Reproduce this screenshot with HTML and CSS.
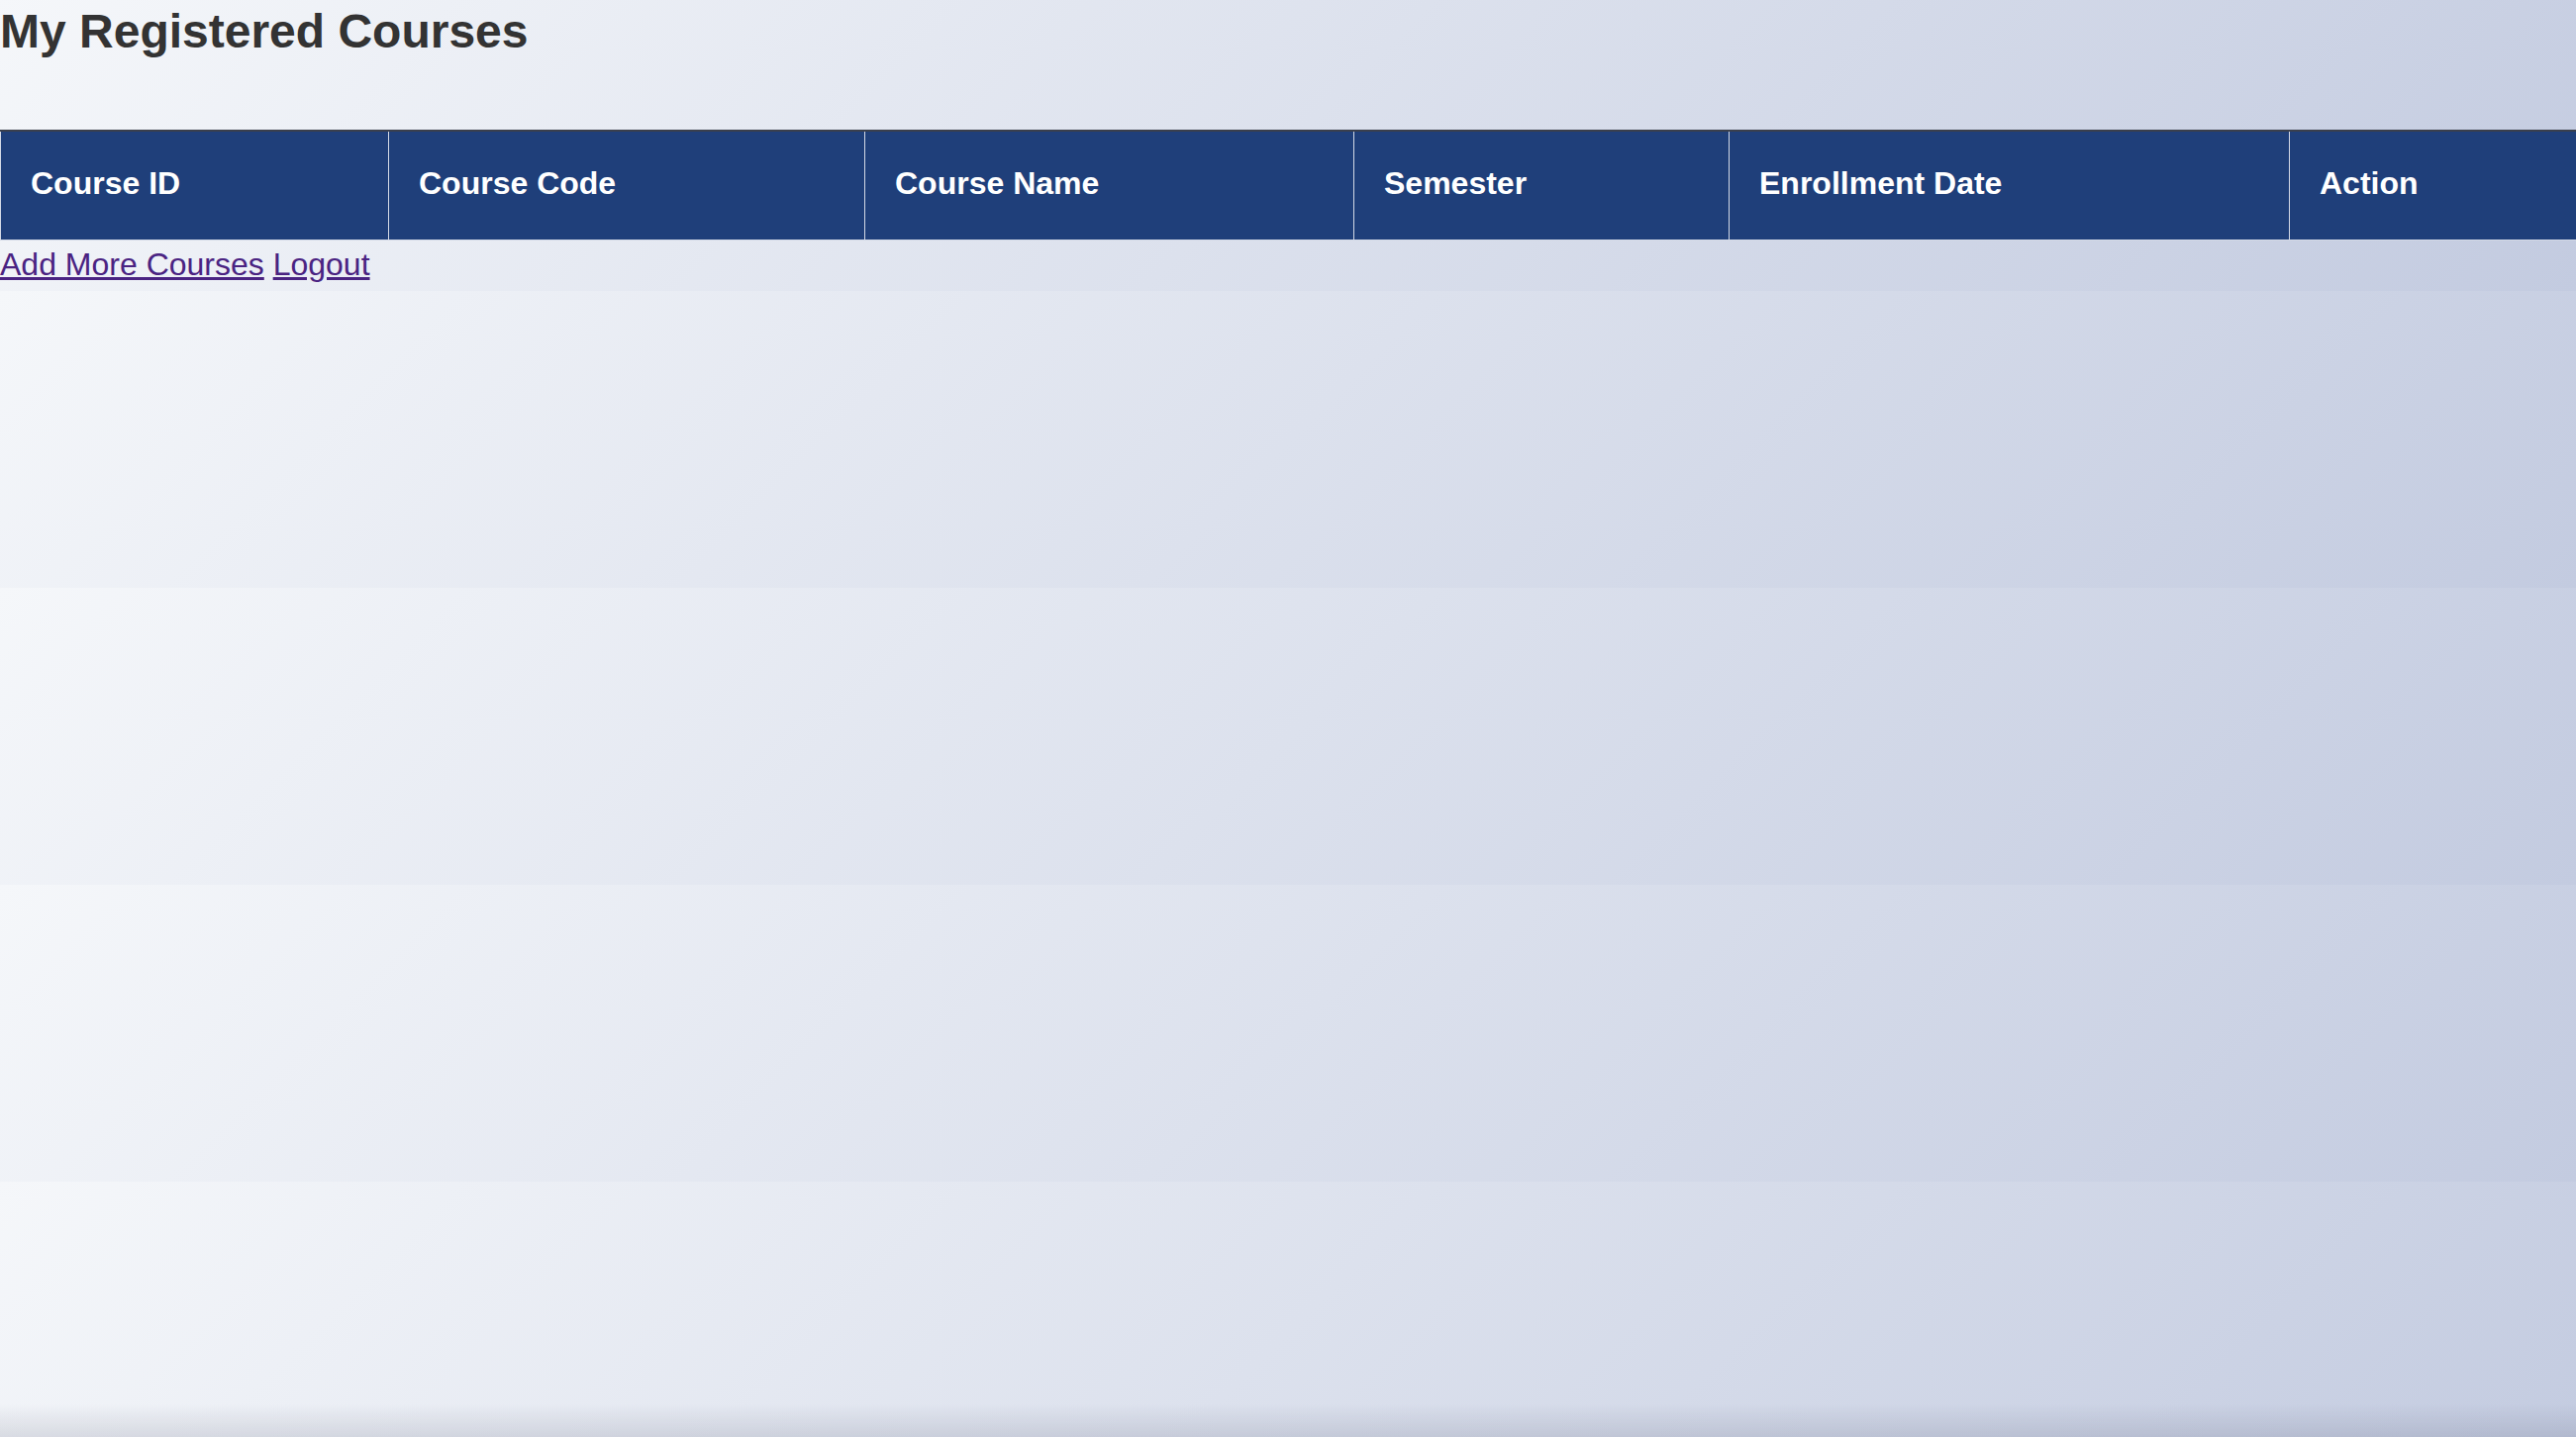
FILE: index.html
```html
<!DOCTYPE html>
<html lang="en">
<head>
<meta charset="utf-8">
<title>My Registered Courses</title>
<link rel="stylesheet" href="styles.css">
</head>
<body>
<h1 class="page-title">My Registered Courses</h1>
<table class="course-table">
  <colgroup>
    <col class="c-id">
    <col class="c-code">
    <col class="c-name">
    <col class="c-sem">
    <col class="c-date">
    <col class="c-action">
  </colgroup>
  <thead>
    <tr>
      <th>Course ID</th>
      <th>Course Code</th>
      <th>Course Name</th>
      <th>Semester</th>
      <th>Enrollment Date</th>
      <th>Action</th>
    </tr>
  </thead>
  <tbody></tbody>
</table>
<div class="links">
  <a href="#" class="link">Add More Courses</a> <a href="#" class="link">Logout</a>
</div>
</body>
</html>
```

FILE: styles.css
```css
html {
  background-color: #dfe3ee;
  background-image: linear-gradient(135deg, #f5f7fa 0%, #c3cbe0 100%);
  background-size: 100% 300px;
  background-position: 0 -6px;
  background-repeat: repeat;
}

body {
  margin: 0;
  font-family: "Liberation Sans", Arial, Helvetica, sans-serif;
  color: #333333;
}

body::after {
  content: "";
  position: fixed;
  left: 0;
  right: 0;
  bottom: 0;
  height: 34px;
  background: linear-gradient(to bottom, rgba(60, 64, 90, 0) 0%, rgba(60, 64, 90, 0.13) 100%);
  pointer-events: none;
}

.page-title {
  margin: 0 0 72px;
  padding-top: 4px;
  font-size: 48px;
  font-weight: bold;
  line-height: normal;
  color: #333333;
}

.course-table {
  width: 100%;
  table-layout: fixed;
  border-collapse: collapse;
  border-top: 2px solid #3a3f4c;
}

.c-id { width: 392px; }
.c-code { width: 481px; }
.c-name { width: 494px; }
.c-sem { width: 379px; }
.c-date { width: 566px; }
.c-action { width: 290px; }

.course-table th {
  background: #1f3f7a;
  color: #ffffff;
  font-size: 32px;
  font-weight: bold;
  text-align: left;
  line-height: normal;
  padding: 34px 30px 38px 30px;
  border: 1px solid #d3d9e6;
  border-top: 2px solid #3a3f4c;
}

.links {
  padding-top: 6px;
  padding-bottom: 6px;
  font-size: 32px;
  line-height: normal;
}

.link {
  color: #4a2382;
  text-decoration: underline;
}
```
